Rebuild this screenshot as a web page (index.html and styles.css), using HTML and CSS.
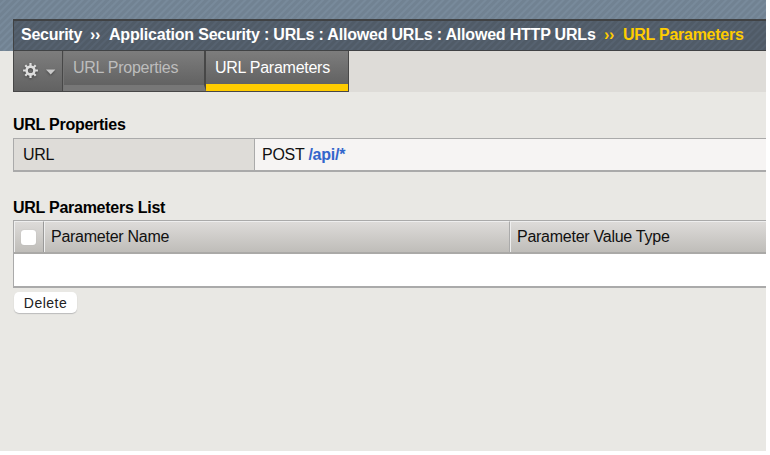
FILE: index.html
```html
<!DOCTYPE html>
<html lang="en">
<head>
<meta charset="utf-8">
<title>URL Parameters</title>
<link rel="stylesheet" href="styles.css">
</head>
<body>
<div class="page">
  <header class="banner">
    <nav class="breadcrumb">
      <span class="root">Security</span><span class="sep">››</span><span class="path">Application Security : URLs : Allowed URLs : Allowed HTTP URLs</span><span class="sep current">››</span><span class="last current">URL Parameters</span>
    </nav>
  </header>
  <div class="tabbar">
    <div class="tabs">
      <button class="tab gear" aria-label="Options">
        <svg width="36" height="22" viewBox="0 0 36 22">
          <g transform="translate(8.5 10.5)" stroke="#dedede" fill="none">
            <circle r="3.9" stroke-width="2.6"/>
            <path stroke-width="2.2" d="M0-4.6V-7.4M0 4.6V7.4M-4.6 0H-7.4M4.6 0H7.4M-3.3-3.3-5.2-5.2M3.3-3.3 5.2-5.2M-3.3 3.3-5.2 5.2M3.3 3.3 5.2 5.2"/>
          </g>
          <path d="M24 9.5h9.4l-4.7 5z" fill="#c9c9c9"/>
        </svg>
      </button>
      <a class="tab properties">URL Properties</a>
      <a class="tab parameters">URL Parameters</a>
    </div>
  </div>
  <main>
    <h2>URL Properties</h2>
    <div class="details">
      <div class="label">URL</div>
      <div class="value">POST <b>/api/*</b></div>
    </div>
    <h2 class="list-title">URL Parameters List</h2>
    <div class="table">
      <div class="head">
        <div class="cell check"><span class="checkbox"></span></div>
        <div class="cell name">Parameter Name</div>
        <div class="cell type">Parameter Value Type</div>
      </div>
      <div class="empty"></div>
    </div>
    <button class="delete">Delete</button>
  </main>
</div>
</body>
</html>
```
FILE: styles.css
```css
* { box-sizing: border-box; }
body {
  margin: 0;
  background: #fff;
  font: 16px/18px "Liberation Sans", Arial, sans-serif;
  letter-spacing: -.26px;
  color: #111;
}
.page {
  width: 766px;
  height: 451px;
  overflow: hidden;
  background: #e9e8e4;
}
.banner {
  height: 51px;
  padding: 19px 0 0 13px;
  background: repeating-linear-gradient(135deg, #718292 0 2px, #788a9b 3px 4px, #718292 5px);
}
.breadcrumb {
  display: flex;
  align-items: center;
  height: 32px;
  padding: 0 0 1px 7px;
  border: solid #404244;
  border-width: 2px 0 1px 1px;
  background: repeating-linear-gradient(135deg, #505b67 0 2px, #566270 3px 4px, #505b67 5px);
  color: #fff;
  font-weight: bold;
  white-space: nowrap;
}
.breadcrumb .root { width: 69px; }
.breadcrumb .sep { width: 19px; }
.breadcrumb .path { width: 495px; letter-spacing: -.2px; }
.breadcrumb .current { color: #fc0; }
.tabbar {
  height: 41px;
  margin-left: 13px;
  background: #dedcd8;
}
.tabs {
  display: flex;
  width: 336px;
  height: 41px;
  border: solid #474747;
  border-width: 0 1px 1px;
}
.tab {
  height: 40px;
  padding: 8px 0 0 9px;
  border: 0;
  border-right: 1px solid #474747;
  background: linear-gradient(#7d7d7d, #626262);
  color: #bdbdbd;
  white-space: nowrap;
}
.gear { width: 49px; padding: 0 0 0 8px; }
.gear svg { display: block; filter: drop-shadow(0 1px 1px #444); }
.properties { width: 143px; border-left: 1px solid #747474; border-bottom: 6px solid #777; border-right: 2px solid #474747; }
.parameters { width: 142px; padding-left: 9px; border-bottom: 7px solid #fc0; border-right: 0; color: #fff; }
main { padding-left: 13px; }
h2 { margin: 24px 0 5px; font-size: 16px; line-height: 17px; color: #000; }
.details {
  display: flex;
  height: 34px;
  border: solid #aaa;
  border-width: 1px 0 2px 1px;
  line-height: 31px;
}
.label { width: 241px; padding-left: 9px; border-right: 1px solid #aaa; background: #dedcd8; }
.value { flex: 1; padding-left: 7px; background: #f6f4f3; }
.value b { color: #3366cc; }
.list-title { margin: 27px 0 4px; }
.table { border: solid #aaa; border-width: 1px 0 2px 1px; }
.head {
  display: flex;
  height: 33px;
  border-bottom: 2px solid #aaa9a7;
  background: linear-gradient(#dedcda, #bfbdb9);
  line-height: 30px;
}
.cell { border-left: 1px solid #eee; border-top: 1px solid #eee; }
.check { width: 30px; padding: 8px 0 0 6px; border-right: 1px solid #999; }
.checkbox { display: block; width: 15px; height: 15px; border-radius: 3px; background: #fff; box-shadow: 0 0 1px #aaa; }
.name { width: 466px; padding-left: 6px; border-right: 1px solid #aaa; }
.type { flex: 1; padding-left: 6px; }
.empty { height: 32px; background: #fff; }
.delete {
  display: block;
  width: 63px;
  height: 21px;
  margin: 4px 0 0 1px;
  padding: 1px 0 0;
  border: 0;
  border-radius: 5px;
  background: #fff;
  box-shadow: 0 1px 1px #bbb;
  color: #222;
  font: 14px/21px "Liberation Sans", Arial, sans-serif;
  letter-spacing: .5px;
}
```
